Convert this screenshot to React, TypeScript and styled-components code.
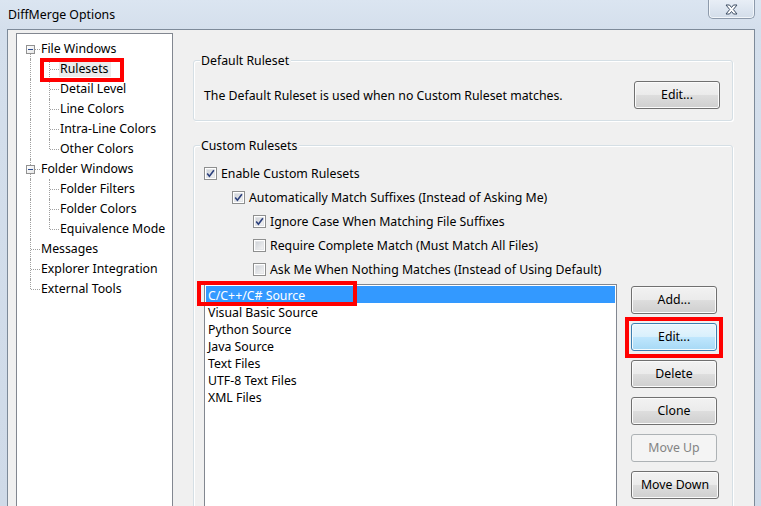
import React from 'react';
import styled, { createGlobalStyle, css } from 'styled-components';

const GlobalStyle = createGlobalStyle`
  html, body {
    margin: 0;
    padding: 0;
    background: #d6e0ec;
  }
  body {
    font-family: "Noto Sans", "Liberation Sans", sans-serif;
    font-size: 12.3px;
    color: #000;
  }
  * {
    box-sizing: border-box;
  }
`;

const Window = styled.div`
  width: 761px;
  height: 506px;
  overflow: hidden;
  display: flex;
  flex-direction: column;
  background: linear-gradient(#dbe5f1, #d4dfec 30px, #cfdae8);
  padding: 0 6px 0 7px;
`;

const TitleBar = styled.div`
  height: 29px;
  flex-shrink: 0;
  display: flex;
  align-items: flex-start;
`;

const Title = styled.div`
  padding: 6px 0 0 1px;
  line-height: 18px;
`;

const CloseButton = styled.div`
  margin-left: auto;
  width: 47px;
  height: 19px;
  display: flex;
  align-items: center;
  justify-content: center;
  border: 1px solid #8d9aab;
  border-top: none;
  border-radius: 0 0 5px 5px;
  background: linear-gradient(#e8eef6, #dbe4ef 60%, #d3dde9);
  box-shadow: inset 0 -1px 0 #f2f6fa, inset 1px 0 0 #f2f6fa, inset -1px 0 0 #f2f6fa;
`;

const Client = styled.div`
  flex: 1;
  display: flex;
  background: #f0f0f0;
  border: 1px solid #7d8a99;
  border-bottom: none;
  min-height: 0;
`;

const Tree = styled.div`
  margin: 3px 0 0 8px;
  width: 157px;
  min-height: 490px;
  flex-shrink: 0;
  align-self: flex-start;
  border: 1px solid #828790;
  background: #fff;
  padding: 5px 0 0 4px;
`;

const TreeRow = styled.div`
  position: relative;
  height: 20px;
  display: flex;
  align-items: center;
`;

type GuideKind = 'pass' | 'tee' | 'ell' | 'first';

const Guide = styled.span<{ $kind: GuideKind }>`
  position: relative;
  width: 19px;
  height: 20px;
  flex-shrink: 0;

  &::before {
    content: '';
    position: absolute;
    left: 9px;
    top: ${p => (p.$kind === 'first' ? '10px' : '0')};
    bottom: ${p => (p.$kind === 'ell' ? '10px' : '0')};
    border-left: 1px dotted #a0a0a0;
  }

  ${p =>
    p.$kind !== 'pass' &&
    css`
      &::after {
        content: '';
        position: absolute;
        left: 10px;
        top: 10px;
        width: 9px;
        border-top: 1px dotted #a0a0a0;
      }
    `}
`;

const Expander = styled.span`
  position: absolute;
  z-index: 1;
  left: 5px;
  top: 6px;
  width: 9px;
  height: 9px;
  border: 1px solid #919191;
  background: linear-gradient(135deg, #ffffff, #e6e6e6);

  &::after {
    content: '';
    position: absolute;
    left: 1px;
    top: 3px;
    width: 5px;
    height: 1px;
    background: #2a4a8f;
  }
`;

const TreeLabel = styled.span<{ $selected?: boolean }>`
  padding: 0 2px 0 1px;
  line-height: 16px;
  height: 16px;
  white-space: nowrap;
  background: ${p => (p.$selected ? '#ebebeb' : 'transparent')};
`;

const Callout = styled.span<{ $l: number; $t: number; $w: number; $h: number }>`
  position: absolute;
  left: ${p => p.$l}px;
  top: ${p => p.$t}px;
  width: ${p => p.$w}px;
  height: ${p => p.$h}px;
  border: 4px solid #ff0000;
  pointer-events: none;
  z-index: 2;
`;

const Pane = styled.div`
  flex: 1;
  display: flex;
  flex-direction: column;
  padding: 30px 21px 0 20px;
  min-width: 0;
`;

const GroupBox = styled.div<{ $grow?: boolean }>`
  position: relative;
  border: 1px solid #d5dfe5;
  border-radius: 3px;
  box-shadow: inset 1px 1px 0 #fff, 1px 1px 0 #fff;
  ${p =>
    p.$grow &&
    css`
      margin-top: 24px;
      flex: 1;
      min-height: 400px;
    `}
`;

const Legend = styled.span`
  position: absolute;
  left: 6px;
  top: -9px;
  padding: 0 2px 0 1px;
  line-height: 17px;
  background: #f0f0f0;
`;

const DefaultRow = styled.div`
  display: flex;
  align-items: center;
  justify-content: space-between;
  padding: 20px 12px 11px 10px;
`;

const CustomBody = styled.div`
  padding: 15px 0 0 10px;
`;

const CheckRow = styled.label<{ $indent: number }>`
  display: flex;
  align-items: center;
  height: 24px;
  padding-left: ${p => p.$indent}px;
`;

const CheckBox = styled.span`
  width: 13px;
  height: 13px;
  flex-shrink: 0;
  border: 1px solid #8e8f8f;
  background: #fff;
  padding: 1px;
  display: flex;
`;

const CheckInner = styled.span`
  flex: 1;
  display: flex;
  background: linear-gradient(135deg, #cbcfd5, #f6f6f6);
  box-shadow: inset 0 0 0 1px #e3e5e8;
`;

const CheckText = styled.span`
  margin-left: 4px;
  white-space: nowrap;
`;

const ListArea = styled.div`
  display: flex;
  align-items: flex-start;
  gap: 14px;
  margin-top: 3px;
`;

const ListBox = styled.div`
  width: 413px;
  height: 240px;
  flex-shrink: 0;
  border: 1px solid #828790;
  background: #fff;
  padding: 1px;
`;

const ListItem = styled.div<{ $selected?: boolean }>`
  position: relative;
  height: 17px;
  line-height: 19px;
  padding-left: 2px;
  white-space: nowrap;
  ${p =>
    p.$selected &&
    css`
      background: #3399ff;
      color: #fff;
    `}
`;

const ButtonColumn = styled.div`
  display: flex;
  flex-direction: column;
  align-items: flex-start;
  gap: 9px;
  padding-top: 2px;
`;

const Button = styled.div<{ $variant?: 'hot' | 'disabled'; $width?: number }>`
  position: relative;
  width: ${p => p.$width ?? 86}px;
  height: 28px;
  display: flex;
  align-items: center;
  justify-content: center;
  border: 1px solid #707070;
  border-radius: 3px;
  background: linear-gradient(#f2f2f2, #ebebeb 48%, #dddddd 52%, #cfcfcf);
  box-shadow: inset 0 0 0 1px #fbfbfb;
  line-height: 16px;
  white-space: nowrap;

  ${p =>
    p.$variant === 'hot' &&
    css`
      border-color: #3c7fb1;
      background: linear-gradient(#eaf6fd, #d9f0fc 48%, #bee6fd 52%, #a7d9f5);
      box-shadow: inset 0 0 0 1px #f4fbfe;
    `}

  ${p =>
    p.$variant === 'disabled' &&
    css`
      border-color: #adb2b5;
      background: #f4f4f4;
      box-shadow: none;
      color: #838383;
    `}
`;

const CheckMark = () => (
  <svg width="9" height="9" viewBox="0 0 9 9">
    <path d="M1.2 4.6 L3.4 7.2 L7.9 1.2" fill="none" stroke="#2b3f7c" strokeWidth="1.6" />
  </svg>
);

const CloseGlyph = () => (
  <svg width="13" height="11" viewBox="0 0 13 11">
    <path
      d="M1 1 H4.5 L6.5 3.5 L8.5 1 H12 L8.3 5.5 L12 10 H8.5 L6.5 7.5 L4.5 10 H1 L4.7 5.5 Z"
      fill="#ffffff"
      stroke="#3d4d63"
      strokeWidth="1"
      strokeLinejoin="round"
    />
  </svg>
);

type TreeNode = {
  label: string;
  guides: GuideKind[];
  expander?: boolean;
  selected?: boolean;
};

const treeNodes: TreeNode[] = [
  { label: 'File Windows', guides: ['first'], expander: true },
  { label: 'Rulesets', guides: ['pass', 'tee'], selected: true },
  { label: 'Detail Level', guides: ['pass', 'tee'] },
  { label: 'Line Colors', guides: ['pass', 'tee'] },
  { label: 'Intra-Line Colors', guides: ['pass', 'tee'] },
  { label: 'Other Colors', guides: ['pass', 'ell'] },
  { label: 'Folder Windows', guides: ['tee'], expander: true },
  { label: 'Folder Filters', guides: ['pass', 'tee'] },
  { label: 'Folder Colors', guides: ['pass', 'tee'] },
  { label: 'Equivalence Mode', guides: ['pass', 'ell'] },
  { label: 'Messages', guides: ['tee'] },
  { label: 'Explorer Integration', guides: ['tee'] },
  { label: 'External Tools', guides: ['ell'] },
];

const checks = [
  { label: 'Enable Custom Rulesets', indent: 0, checked: true },
  { label: 'Automatically Match Suffixes (Instead of Asking Me)', indent: 28, checked: true },
  { label: 'Ignore Case When Matching File Suffixes', indent: 49, checked: true },
  { label: 'Require Complete Match (Must Match All Files)', indent: 49, checked: false },
  { label: 'Ask Me When Nothing Matches (Instead of Using Default)', indent: 49, checked: false },
];

const rulesets = [
  'C/C++/C# Source',
  'Visual Basic Source',
  'Python Source',
  'Java Source',
  'Text Files',
  'UTF-8 Text Files',
  'XML Files',
];

export default function App() {
  return (
    <>
      <GlobalStyle />
      <Window>
        <TitleBar>
          <Title>DiffMerge Options</Title>
          <CloseButton>
            <CloseGlyph />
          </CloseButton>
        </TitleBar>
        <Client>
          <Tree>
            {treeNodes.map(node => (
              <TreeRow key={node.label}>
                {node.guides.map((g, i) => (
                  <Guide key={i} $kind={g}>
                    {node.expander && i === 0 && <Expander />}
                  </Guide>
                ))}
                <TreeLabel $selected={node.selected}>{node.label}</TreeLabel>
                {node.selected && <Callout $l={19} $t={-1} $w={84} $h={24} />}
              </TreeRow>
            ))}
          </Tree>
          <Pane>
            <GroupBox>
              <Legend>Default Ruleset</Legend>
              <DefaultRow>
                <span>The Default Ruleset is used when no Custom Ruleset matches.</span>
                <Button>Edit...</Button>
              </DefaultRow>
            </GroupBox>
            <GroupBox $grow>
              <Legend>Custom Rulesets</Legend>
              <CustomBody>
                {checks.map(c => (
                  <CheckRow key={c.label} $indent={c.indent}>
                    <CheckBox>
                      <CheckInner>{c.checked && <CheckMark />}</CheckInner>
                    </CheckBox>
                    <CheckText>{c.label}</CheckText>
                  </CheckRow>
                ))}
                <ListArea>
                  <ListBox>
                    {rulesets.map((r, i) => (
                      <ListItem key={r} $selected={i === 0}>
                        {r}
                        {i === 0 && <Callout $l={-9} $t={-5} $w={160} $h={25} />}
                      </ListItem>
                    ))}
                  </ListBox>
                  <ButtonColumn>
                    <Button>Add...</Button>
                    <Button $variant="hot">
                      Edit...
                      <Callout $l={-7} $t={-7} $w={98} $h={41} />
                    </Button>
                    <Button>Delete</Button>
                    <Button>Clone</Button>
                    <Button $variant="disabled">Move Up</Button>
                    <Button $width={88}>Move Down</Button>
                  </ButtonColumn>
                </ListArea>
              </CustomBody>
            </GroupBox>
          </Pane>
        </Client>
      </Window>
    </>
  );
}
